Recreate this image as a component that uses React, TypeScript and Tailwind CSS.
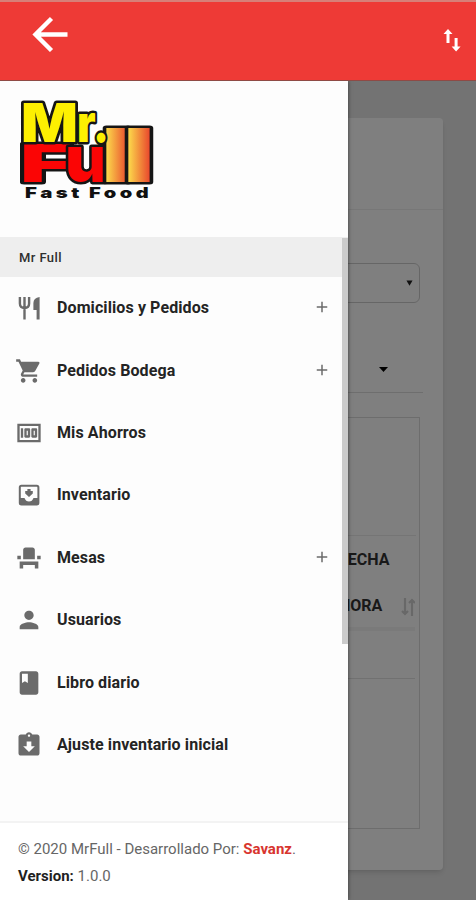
import type { ComponentType } from "react";
import {
  MdAdd,
  MdAssignmentReturned,
  MdBook,
  MdEventSeat,
  MdMoney,
  MdPerson,
  MdShoppingCart,
} from "react-icons/md";

type MenuItem = {
  label: string;
  icon: ComponentType<{ className?: string }>;
  expandable?: boolean;
};

function CutleryIcon({ className }: { className?: string }) {
  return (
    <svg viewBox="0 0 28 28" className={className}>
      <path
        d="M4.9 3V9.5Q4.9 14 9.5 14Q14.1 14 14.1 9.5V3M9.5 3V25.5"
        fill="none"
        stroke="currentColor"
        strokeWidth="2.4"
      />
      <path d="M24.6 3V25.5H21.6V16H18.4V9Q18.4 4 24.6 3z" fill="currentColor" />
    </svg>
  );
}

function InboxIcon({ className }: { className?: string }) {
  return (
    <svg viewBox="0 0 28 28" className={className}>
      <rect x="4.8" y="4.8" width="18.6" height="18.6" rx="1.6" fill="none" stroke="currentColor" strokeWidth="2" />
      <path d="M4.5 17H9.5Q10.8 20.5 14 20.5Q17.2 20.5 18.5 17H23.5V23.5H4.5z" fill="currentColor" />
      <path d="M12.4 8H15.6V10H17.8V12.6L14 16L10.2 12.6V10H12.4z" fill="currentColor" />
    </svg>
  );
}

const menu: MenuItem[] = [
  { label: "Domicilios y Pedidos", icon: CutleryIcon, expandable: true },
  { label: "Pedidos Bodega", icon: MdShoppingCart, expandable: true },
  { label: "Mis Ahorros", icon: MdMoney },
  { label: "Inventario", icon: InboxIcon },
  { label: "Mesas", icon: MdEventSeat, expandable: true },
  { label: "Usuarios", icon: MdPerson },
  { label: "Libro diario", icon: MdBook },
  { label: "Ajuste inventario inicial", icon: MdAssignmentReturned },
];

function Logo() {
  return (
    <svg width="140" height="106" viewBox="0 0 140 106" className="block">
      <defs>
        <linearGradient id="flame" x1="0" x2="1" y1="0" y2="0">
          <stop offset="0.2" stopColor="#fbd34a" />
          <stop offset="0.85" stopColor="#e8452c" />
        </linearGradient>
      </defs>
      <g
        fontFamily="Inter, sans-serif"
        fontWeight="900"
        stroke="#151515"
        strokeWidth="5"
        strokeLinejoin="round"
        paintOrder="stroke"
      >
        <text x="0" y="86" fontSize="52" fill="#fb0505" textLength="52" lengthAdjust="spacingAndGlyphs">F</text>
        <text x="45" y="86" fontSize="65" fill="#fb0505" textLength="43" lengthAdjust="spacingAndGlyphs">u</text>
        <text x="81" y="86" fontSize="74" fill="url(#flame)" textLength="32" lengthAdjust="spacingAndGlyphs">l</text>
        <text x="103" y="86" fontSize="74" fill="url(#flame)" textLength="32" lengthAdjust="spacingAndGlyphs">l</text>
        <text x="1" y="46" fontSize="53" fill="#fdf001" textLength="57" lengthAdjust="spacingAndGlyphs">M</text>
        <text x="57" y="46" fontSize="52" fill="#fdf001" textLength="32" lengthAdjust="spacingAndGlyphs">r.</text>
      </g>
      <g fontFamily="Inter, sans-serif" fontWeight="900" fontSize="14.5" fill="#111" letterSpacing="2.5">
        <text x="5" y="102" textLength="58" lengthAdjust="spacingAndGlyphs">Fast</text>
        <text x="69" y="102" textLength="63" lengthAdjust="spacingAndGlyphs">Food</text>
      </g>
    </svg>
  );
}

function Header() {
  return (
    <header className="relative z-20 flex h-[81px] items-start justify-between border-t-2 border-b border-t-[#d77f78] border-b-[#8f4a45] bg-[#ee3a36] pr-[15px] pl-8 text-white">
      <svg width="36" height="36" viewBox="0 0 36 36" className="mt-3.5" fill="none" stroke="currentColor" strokeWidth="4.4">
        <path d="M35.5 18.5H4M19.5 2.5L3.5 18.5L19.5 34.5" />
      </svg>
      <svg width="18" height="24" viewBox="0 0 18 24" className="mt-[26px]" fill="currentColor">
        <path d="M5 1L9.5 6H6.5V15H3.5V6H0.5zM11.6 10H14.6V18.5H17.6L13.1 23.5L8.6 18.5H11.6z" />
      </svg>
    </header>
  );
}

function Page() {
  return (
    <div className="h-full bg-[#e7e7e7] pt-[37px] pr-[33px]">
      <div className="h-[752px] rounded-r-sm bg-white shadow-md">
        <div className="h-[92px] border-b border-[#eee]" />
        <div className="pt-[53px] pr-[23px]">
          <div className="flex h-10 items-center justify-end rounded-md border border-[#cdcdcd] pr-[6px]">
            <svg width="7" height="6" viewBox="0 0 8 6">
              <path d="M0.5 0H7.5L4 6z" fill="#222" />
            </svg>
          </div>
        </div>
        <div className="mr-5 flex h-[90px] items-end justify-end border-b border-[#dcdcdc] pr-[35px] pb-5">
          <svg width="9" height="5" viewBox="0 0 9 5">
            <path d="M0 0H9L4.5 5z" fill="#000" />
          </svg>
        </div>
        <div className="mt-6 mr-[23px] h-[412px] border border-[#dadada] text-base font-bold text-[#333]">
          <div className="mr-[3px] h-[118px] border-b border-[#ebebeb]" />
          <div className="mr-1 flex h-[95px] items-start justify-between border-b-4 border-[#f5f5f5] pl-[338px]">
            <div className="pt-px leading-[46px]">
              <div className="h-[46px]">FECHA</div>
              <div className="h-[46px]">HORA</div>
            </div>
            <svg width="14" height="18" viewBox="0 0 14 18" className="mt-[62px] text-[#d0d0d0]" fill="none" stroke="currentColor" strokeWidth="2.2">
              <path d="M4 0V16M1 13L4 16L7 13M11 18V3M8 5L11 2L14 5" />
            </svg>
          </div>
          <div className="mr-1 h-[48px] border-b border-[#e2e2e2]" />
        </div>
      </div>
    </div>
  );
}

function Drawer() {
  return (
    <aside className="absolute top-0 left-0 flex h-full w-[348px] flex-col bg-[#fdfdfd] shadow-[0_0_4px_rgba(0,0,0,0.55)]">
      <div className="h-[156px] shrink-0 pt-[15px] pl-5">
        <Logo />
      </div>

      <div className="relative grow">
        <div className="flex h-10 items-center bg-[#eeeeee] pt-px pl-[19px] text-[13px] font-medium tracking-[0.4px] text-[#2f2f2f]">
          Mr Full
        </div>
        <nav>
          {menu.map(({ label, icon: Icon, expandable }) => (
            <div key={label} className="flex h-[62.4px] items-center pr-[17px] pl-[15px]">
              <Icon className="size-7 shrink-0 text-[#6b6b6b]" />
              <span className="ml-3.5 grow text-base font-bold tracking-[0.1px] text-[#242424]">{label}</span>
              {expandable && <MdAdd className="-mt-0.5 size-[18px] text-[#6b6b6b]" />}
            </div>
          ))}
        </nav>
        {/* Scrollbar thumb */}
        <div className="absolute top-px right-0 h-[406px] w-1.5 bg-[#cbcbcb]" />
      </div>

      <footer className="h-[79px] shrink-0 border-t-2 border-[#f3f3f3] bg-white pt-[13px] pl-[18px] text-[15px] leading-[27px] text-[#666]">
        <p>
          © 2020 MrFull - Desarrollado Por: <span className="font-bold text-[#d8352f]">Savanz</span>.
        </p>
        <p>
          <span className="font-bold text-[#1f1f1f]">Version:</span> 1.0.0
        </p>
      </footer>
    </aside>
  );
}

export default function App() {
  return (
    <div className="h-[900px] w-[476px] overflow-hidden font-['Roboto',sans-serif]">
      <Header />
      <main className="relative h-[819px]">
        <Page />
        <div className="absolute inset-0 bg-black/50" />
        <Drawer />
      </main>
    </div>
  );
}
